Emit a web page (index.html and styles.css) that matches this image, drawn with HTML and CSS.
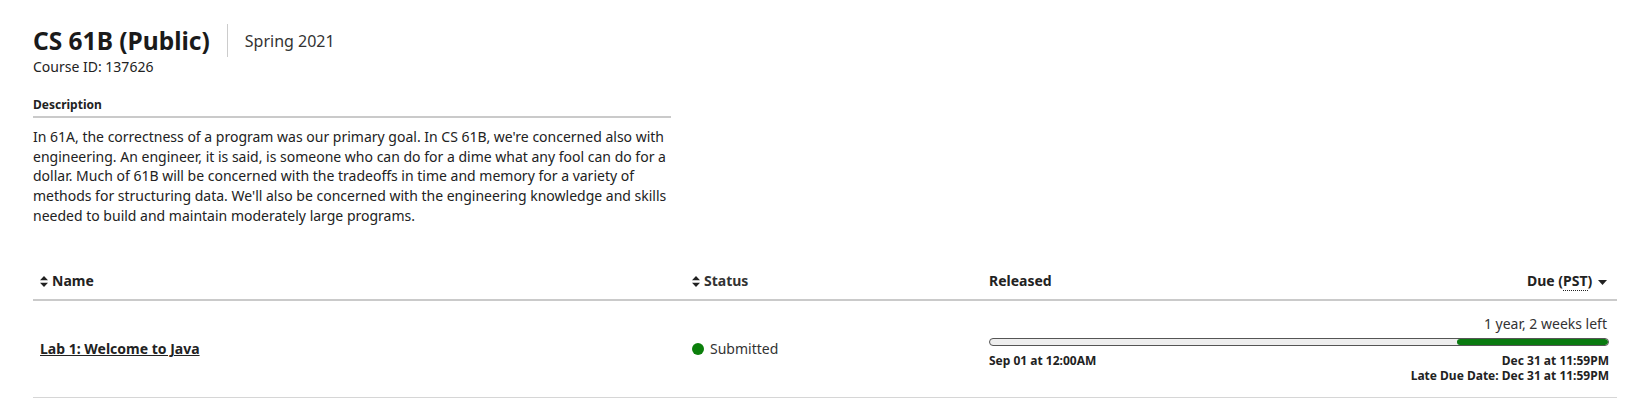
FILE: index.html
```html
<!DOCTYPE html>
<html>
<head>
<meta charset="utf-8">
<link rel="stylesheet" href="styles.css">
</head>
<body>
<main class="page">
  <header class="course-header">
    <div class="title-row">
      <h1 class="course-title">CS 61B (Public)</h1>
      <span class="term">Spring 2021</span>
    </div>
    <div class="course-id">Course ID: 137626</div>
  </header>
  <section class="description">
    <h2 class="desc-label">Description</h2>
    <p class="desc-text">In 61A, the correctness of a program was our primary goal. In CS 61B, we're concerned also with engineering. An engineer, it is said, is someone who can do for a dime what any fool can do for a dollar. Much of 61B will be concerned with the tradeoffs in time and memory for a variety of methods for structuring data. We'll also be concerned with the engineering knowledge and skills needed to build and maintain moderately large programs.</p>
  </section>
  <table class="assignments">
    <thead>
      <tr>
        <th class="col-name"><span class="sort"><svg width="8" height="11" viewBox="0 0 8 11"><path d="M4 0 L8 4.3 H0 Z M4 11 L8 6.7 H0 Z" fill="#222"/></svg></span>Name</th>
        <th class="col-status"><span class="sort"><svg width="8" height="11" viewBox="0 0 8 11"><path d="M4 0 L8 4.3 H0 Z M4 11 L8 6.7 H0 Z" fill="#222"/></svg></span>Status</th>
        <th class="col-released">Released</th>
        <th class="col-due">Due (<abbr class="tz">PST</abbr>) <svg class="caret" width="9" height="5" viewBox="0 0 9 5"><path d="M0 0 H9 L4.5 5 Z" fill="#222"/></svg></th>
      </tr>
    </thead>
    <tbody>
      <tr>
        <td class="col-name"><a class="link" href="#">Lab 1: Welcome to Java</a></td>
        <td class="col-status"><span class="dot"></span>Submitted</td>
        <td class="col-progress" colspan="2">
          <div class="time-left">1 year, 2 weeks left</div>
          <div class="bar"><div class="bar-fill" style="width:24.4%"></div></div>
          <div class="dates">
            <div class="released">Sep 01 at 12:00AM</div>
            <div class="due">
              <div>Dec 31 at 11:59PM</div>
              <div>Late Due Date: Dec 31 at 11:59PM</div>
            </div>
          </div>
        </td>
      </tr>
    </tbody>
  </table>
</main>
</body>
</html>
```

FILE: styles.css
```css
* { box-sizing: border-box; }
html, body { margin: 0; padding: 0; background: #fff; }
body {
  font-family: "Noto Sans", "DejaVu Sans", sans-serif;
  color: #222;
}
.page { padding: 24px 10px 0 33px; }
.title-row { display: flex; align-items: center; }
.course-title {
  margin: 0;
  font-size: 24.5px;
  font-weight: 700;
  line-height: 33px;
  padding-right: 17px;
  border-right: 1px solid #ccc;
  color: #1a1a1a;
}
.term { font-size: 16px; padding-left: 17px; color: #333; }
.course-id { font-size: 14px; line-height: 19px; color: #222; }
.description { width: 638px; margin-top: 21px; }
.desc-label {
  margin: 0;
  font-size: 12px;
  font-weight: 700;
  padding-bottom: 3px;
  border-bottom: 2px solid #cacaca;
  line-height: 16px;
}
.desc-text {
  margin: 9px 0 0;
  font-size: 14px;
  line-height: 19.7px;
  color: #222;
}
.assignments {
  width: 100%;
  margin-top: 41px;
  border-collapse: collapse;
  font-size: 14px;
}
.assignments th {
  text-align: left;
  font-weight: 700;
  padding: 4px 7px 8px;
  line-height: 19px;
  border-bottom: 2px solid #cacaca;
  font-size: 14px;
}
.assignments td {
  padding: 0 7px;
  height: 98px;
  border-bottom: 1px solid #d6d6d6;
  vertical-align: middle;
}
.col-name { width: 652px; }
.col-status { width: 297px; }
.col-released { width: 300px; }
th.col-due { text-align: right; padding-right: 10px; }
.sort { display: inline-block; margin-right: 4px; vertical-align: -1px; }
.tz { text-decoration: none; border-bottom: 1px dotted #222; }
.caret { margin-left: 2px; vertical-align: 1px; }
.link { color: #222; font-weight: 700; text-decoration: underline; }
.dot {
  display: inline-block;
  width: 12px; height: 12px;
  border-radius: 50%;
  background: #0b7f0b;
  margin-right: 6px;
  vertical-align: -1px;
}
.col-status { color: #333; }
.col-progress { padding-right: 8px !important; }
.time-left { text-align: right; font-size: 14px; line-height: 19px; color: #333; margin-right: 2px; margin-bottom: 5px; }
.bar {
  height: 8px;
  border: 1.5px solid #555;
  border-radius: 4px;
  background: #eee;
  display: flex;
  justify-content: flex-end;
  overflow: hidden;
}
.bar-fill { background: #0a7a10; height: 100%; border-radius: 3px; }
.dates {
  display: flex;
  justify-content: space-between;
  font-size: 12px;
  font-weight: 700;
  line-height: 14.5px;
  margin-top: 8px;
}
.due { text-align: right; }
```
